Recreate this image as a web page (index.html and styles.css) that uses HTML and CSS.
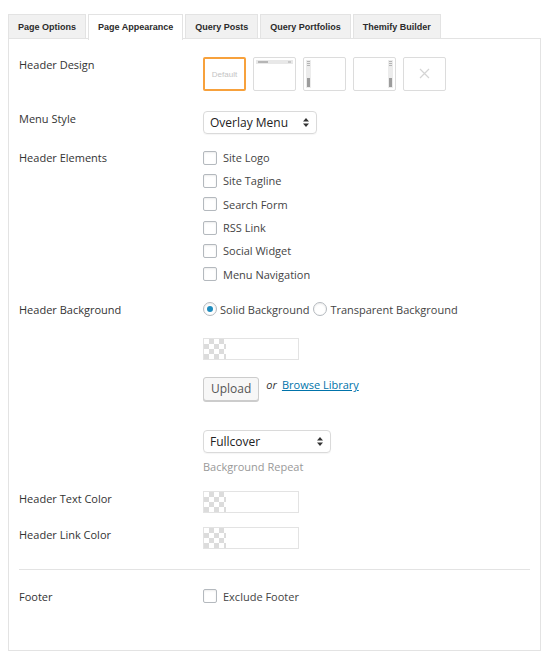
FILE: index.html
```html
<!DOCTYPE html>
<html>
<head>
    <title>Page Appearance</title>
    <link rel="stylesheet" href="styles.css">
</head>
<body>
    <div class="wrap">
        <div class="tabs">
            <div class="tab">Page Options</div>
            <div class="tab active">Page Appearance</div>
            <div class="tab">Query Posts</div>
            <div class="tab">Query Portfolios</div>
            <div class="tab">Themify Builder</div>
        </div>
        <div class="panel">
            <div class="row row-design">
                <div class="label">Header Design</div>
                <div class="field designs">
                    <div class="design selected">Default</div>
                    <div class="design">
                        <svg width="41" height="32" viewBox="0 0 41 32">
                            <rect x="2" y="2" width="37" height="4" fill="#e8e8e8"/>
                            <rect x="4" y="3" width="10" height="2" fill="#b5b5b5"/>
                            <rect x="34" y="3" width="3" height="2" fill="#c8c8c8"/>
                        </svg>
                    </div>
                    <div class="design">
                        <svg width="41" height="32" viewBox="0 0 41 32">
                            <rect x="2" y="2" width="5" height="28" fill="#ececec"/>
                            <rect x="3" y="3" width="3" height="1" fill="#b5b5b5"/>
                            <rect x="3" y="5" width="3" height="1" fill="#b5b5b5"/>
                            <rect x="3" y="7" width="3" height="1" fill="#b5b5b5"/>
                            <rect x="3" y="20" width="3" height="9" fill="#9c9c9c"/>
                        </svg>
                    </div>
                    <div class="design">
                        <svg width="41" height="32" viewBox="0 0 41 32">
                            <rect x="34" y="2" width="5" height="28" fill="#ececec"/>
                            <rect x="35" y="3" width="3" height="1" fill="#b5b5b5"/>
                            <rect x="35" y="5" width="3" height="1" fill="#b5b5b5"/>
                            <rect x="35" y="7" width="3" height="1" fill="#b5b5b5"/>
                            <rect x="35" y="20" width="3" height="9" fill="#9c9c9c"/>
                        </svg>
                    </div>
                    <div class="design">
                        <svg width="41" height="32" viewBox="0 0 41 32">
                            <path d="M16 11 L25 20 M25 11 L16 20" stroke="#d4d4d4" stroke-width="1.2"/>
                        </svg>
                    </div>
                </div>
            </div>

            <div class="row row-menu">
                <div class="label">Menu Style</div>
                <div class="field">
                    <div class="select menu-select">
                        <span>Overlay Menu</span>
                        <svg class="arrows" width="6" height="9" viewBox="0 0 6 9"><path d="M0 3.5 L3 0 L6 3.5 Z M0 5.5 L3 9 L6 5.5 Z" fill="#333"/></svg>
                    </div>
                </div>
            </div>

            <div class="row row-elements">
                <div class="label">Header Elements</div>
                <div class="field">
                    <div class="check"><span class="box"></span>Site Logo</div>
                    <div class="check"><span class="box"></span>Site Tagline</div>
                    <div class="check"><span class="box"></span>Search Form</div>
                    <div class="check"><span class="box"></span>RSS Link</div>
                    <div class="check"><span class="box"></span>Social Widget</div>
                    <div class="check"><span class="box"></span>Menu Navigation</div>
                </div>
            </div>

            <div class="row row-bg">
                <div class="label">Header Background</div>
                <div class="field">
                    <div class="radios">
                        <span class="radio on"></span>Solid Background
                        <span class="radio second"></span>Transparent Background
                    </div>
                    <div class="color color-bg"><span class="checker"></span></div>
                    <div class="upload-line">
                        <span class="button">Upload</span>
                        <em>or</em>
                        <a href="#">Browse Library</a>
                    </div>
                    <div class="select repeat-select">
                        <span>Fullcover</span>
                        <svg class="arrows" width="6" height="9" viewBox="0 0 6 9"><path d="M0 3.5 L3 0 L6 3.5 Z M0 5.5 L3 9 L6 5.5 Z" fill="#333"/></svg>
                    </div>
                    <div class="hint">Background Repeat</div>
                </div>
            </div>

            <div class="row row-text">
                <div class="label">Header Text Color</div>
                <div class="field">
                    <div class="color"><span class="checker"></span></div>
                </div>
            </div>

            <div class="row row-link">
                <div class="label">Header Link Color</div>
                <div class="field">
                    <div class="color"><span class="checker"></span></div>
                </div>
            </div>

            <hr class="sep">

            <div class="row row-footer">
                <div class="label">Footer</div>
                <div class="field">
                    <div class="check"><span class="box"></span>Exclude Footer</div>
                </div>
            </div>
        </div>
    </div>
</body>
</html>
```

FILE: styles.css
```css
body {
    margin: 0;
    font-family: "Open Sans", "Noto Sans", sans-serif;
    font-size: 11px;
    color: #333;
    background: #fff;
}
.wrap {
    padding: 14px 9px 0 8px;
}
.tabs {
    display: flex;
    gap: 2px;
    height: 24px;
    position: relative;
    z-index: 1;
}
.tab {
    font-family: "Liberation Sans", Arial, sans-serif;
    font-weight: bold;
    font-size: 9px;
    color: #2b2b2b;
    background: #f1f1f1;
    border: 1px solid #e3e3e3;
    border-bottom: none;
    padding: 0 9px;
    line-height: 24px;
}
.tab.active {
    background: #fff;
    height: 25px;
}
.panel {
    border: 1px solid #e3e3e3;
    height: 611px;
    padding: 0 10px;
}
.row {
    display: flex;
}
.label {
    width: 184px;
    flex: none;
    line-height: 16px;
}
.field {
    flex: 1;
}
.row-design {
    margin-top: 18px;
}
.designs {
    display: flex;
    gap: 7px;
}
.design {
    width: 41px;
    height: 32px;
    border: 1px solid #dcdcdc;
    border-radius: 2px;
    display: flex;
    align-items: center;
    justify-content: center;
    font-family: "Liberation Sans", Arial, sans-serif;
    font-size: 8px;
    color: #c4c4c4;
}
.design svg {
    display: block;
}
.design.selected {
    border: 2px solid #f7a13c;
    width: 39px;
    height: 30px;
}
.row-menu {
    margin-top: 20px;
}
.select {
    display: flex;
    align-items: center;
    justify-content: space-between;
    border: 1px solid #dadada;
    border-radius: 4px;
    height: 21px;
    padding: 0 7px 0 6px;
    font-size: 12px;
    color: #222;
    box-shadow: 0 1px 1px rgba(0, 0, 0, 0.04);
}
.menu-select {
    width: 99px;
}
.repeat-select {
    width: 113px;
    margin-top: 29px;
}
.row-elements {
    margin-top: 12px;
}
.row-elements .label {
    padding-top: 4px;
}
.check {
    display: flex;
    align-items: center;
    height: 23.3px;
    color: #444;
}
.box {
    width: 12px;
    height: 12px;
    border: 1px solid #b4b9be;
    border-radius: 2px;
    margin-right: 6px;
    background: #fff;
    box-shadow: inset 0 1px 2px rgba(0, 0, 0, 0.08);
}
.row-bg {
    margin-top: 12px;
}
.row-bg .label {
    padding-top: 4px;
}
.radios {
    display: flex;
    align-items: center;
    height: 23px;
    color: #444;
}
.radio {
    width: 12px;
    height: 12px;
    border: 1px solid #b4b9be;
    border-radius: 50%;
    margin-right: 3px;
    position: relative;
    box-shadow: inset 0 1px 2px rgba(0, 0, 0, 0.08);
}
.radio.second {
    margin-left: 4px;
}
.radio.on::after {
    content: "";
    position: absolute;
    left: 3px;
    top: 3px;
    width: 6px;
    height: 6px;
    border-radius: 50%;
    background: #1e8cbe;
}
.color {
    width: 94px;
    height: 20px;
    border: 1px solid #e3e3e3;
    display: flex;
}
.checker {
    width: 22px;
    height: 100%;
    background: repeating-conic-gradient(#dcdcdc 0 25%, #fff 0 50%) 0 0 / 10px 10px;
}
.color-bg {
    margin-top: 17px;
}
.upload-line {
    display: flex;
    align-items: center;
    margin-top: 17px;
}
.button {
    display: inline-block;
    height: 22px;
    line-height: 22px;
    padding: 0 7px;
    border: 1px solid #ccc;
    border-radius: 3px;
    background: #f7f7f7;
    box-shadow: 0 1px 0 #ccc;
    font-size: 12px;
    color: #555;
}
.upload-line em {
    margin: 0 5px 0 7px;
    color: #333;
    position: relative;
    top: -4px;
}
.upload-line a {
    color: #0073aa;
    position: relative;
    top: -4px;
}
.hint {
    color: #999;
    margin-top: 6px;
}
.row-text {
    margin-top: 17px;
}
.row-link {
    margin-top: 14px;
}
.sep {
    border: none;
    border-top: 1px solid #e3e3e3;
    margin: 20px 0 0;
}
.row-footer {
    margin-top: 19px;
}
.row-footer .check {
    height: 15px;
}
.row-footer .label {
    line-height: 15px;
}
```
